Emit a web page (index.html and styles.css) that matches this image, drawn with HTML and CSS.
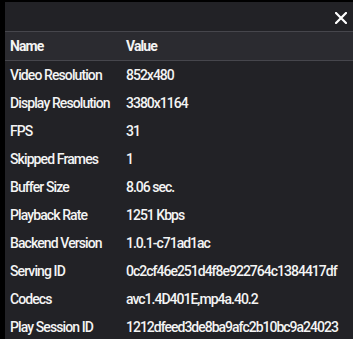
FILE: index.html
```html
<!DOCTYPE html>
<html lang="en">
<head>
<meta charset="utf-8">
<title>Stats for nerds</title>
<link rel="stylesheet" href="styles.css">
</head>
<body>
<div class="panel">
  <div class="topbar">
    <button class="close" aria-label="Close">
      <svg width="12" height="12" viewBox="0 0 12 12"><path d="M1 1 L11 11 M11 1 L1 11" stroke="#fff" stroke-width="2.2" stroke-linecap="square"/></svg>
    </button>
  </div>
  <table class="stats">
    <thead>
      <tr><th>Name</th><th>Value</th></tr>
    </thead>
    <tbody>
      <tr><td>Video Resolution</td><td>852x480</td></tr>
      <tr><td>Display Resolution</td><td>3380x1164</td></tr>
      <tr><td>FPS</td><td>31</td></tr>
      <tr><td>Skipped Frames</td><td>1</td></tr>
      <tr><td>Buffer Size</td><td>8.06 sec.</td></tr>
      <tr><td>Playback Rate</td><td>1251 Kbps</td></tr>
      <tr><td>Backend Version</td><td>1.0.1-c71ad1ac</td></tr>
      <tr><td>Serving ID</td><td>0c2cf46e251d4f8e922764c1384417df</td></tr>
      <tr><td>Codecs</td><td>avc1.4D401E,mp4a.40.2</td></tr>
      <tr><td>Play Session ID</td><td>1212dfeed3de8ba9afc2b10bc9a24023</td></tr>
    </tbody>
  </table>
</div>
</body>
</html>
```
FILE: styles.css
```css
html, body {
  margin: 0;
  padding: 0;
  background: #000;
  height: 100%;
  overflow: hidden;
}

.panel {
  margin: 2px 0 0 5px;
  background: #222226;
  min-height: 100%;
  font-family: Roboto, "Liberation Sans", sans-serif;
  font-size: 14px;
  color: #f4f4f4;
  letter-spacing: -0.9px;
}

.topbar {
  height: 29px;
  display: flex;
  justify-content: flex-end;
  align-items: center;
}

.close {
  background: none;
  border: 0;
  padding: 0;
  margin: 3px 6px 0 0;
  width: 12px;
  height: 12px;
  display: flex;
  cursor: pointer;
}

.stats {
  width: 100%;
  border-collapse: collapse;
}

.stats thead tr {
  background: #2b2b30;
  border-top: 1px solid #46464c;
  border-bottom: 1px solid #46464c;
}

.stats th {
  text-align: left;
  font-weight: 700;
  height: 28px;
  padding: 0;
}

.stats td {
  height: 28px;
  padding: 0;
  font-weight: 500;
  white-space: nowrap;
  letter-spacing: -1px;
}

.stats th:first-child,
.stats td:first-child {
  padding-left: 5px;
  width: 116px;
  letter-spacing: -0.9px;
}
```
